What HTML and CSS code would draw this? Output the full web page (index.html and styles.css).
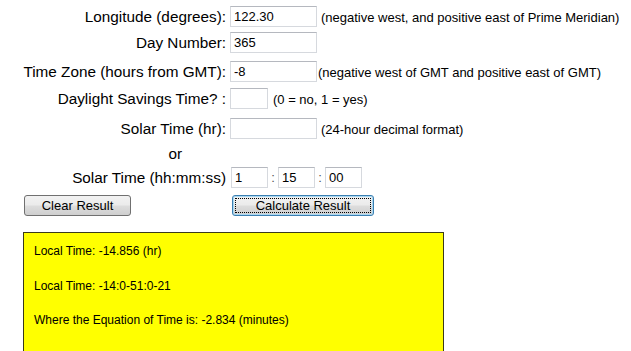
FILE: index.html
```html
<!DOCTYPE html>
<html lang="en">
<head>
    <meta charset="UTF-8">
    <title>Local Time from Solar Time</title>
    <link rel="stylesheet" href="styles.css">
</head>
<body>
    <div class="calc">
        <label class="label">Longitude (degrees):</label>
        <div class="field"><input class="box" type="text" value="122.30"><span class="note spaced">(negative west, and positive east of Prime Meridian)</span></div>

        <label class="label">Day Number:</label>
        <div class="field"><input class="box" type="text" value="365"></div>

        <label class="label">Time Zone (hours from GMT):</label>
        <div class="field"><input class="box" type="text" value="-8"><span class="note">(negative west of GMT and positive east of GMT)</span></div>

        <label class="label">Daylight Savings Time? :</label>
        <div class="field"><input class="box small" type="text" value=""><span class="note wide">(0 = no, 1 = yes)</span></div>

        <label class="label">Solar Time (hr):</label>
        <div class="field"><input class="box" type="text" value=""><span class="note spaced">(24-hour decimal format)</span></div>

        <div class="label or">or</div>
        <div class="field"></div>

        <label class="label">Solar Time (hh:mm:ss)</label>
        <div class="field">
            <input class="box hms" type="text" value="1"><span class="colon">:</span><input class="box hms" type="text" value="15"><span class="colon">:</span><input class="box hms" type="text" value="00">
        </div>

        <div class="btn-cell"><button class="btn clear">Clear Result</button></div>
        <div class="field"><button class="btn calc-btn"><span class="focus">Calculate Result</span></button></div>
    </div>

    <div class="result">
        <p>Local Time: -14.856 (hr)</p>
        <p>Local Time: -14:0-51:0-21</p>
        <p>Where the Equation of Time is: -2.834 (minutes)</p>
    </div>
</body>
</html>
```

FILE: styles.css
```css
body {
    margin: 0;
    font-family: 'Liberation Sans', Arial, sans-serif;
    color: #000;
    background: #fff;
}
.calc {
    display: grid;
    grid-template-columns: 226px auto;
    grid-template-rows: 26px 29px 27px 30px 25px 24px 28px 21px;
    column-gap: 4px;
    padding-top: 6px;
}
.label {
    font-size: 15.3px;
    line-height: 21px;
    text-align: right;
    white-space: nowrap;
}
.or {
    padding-right: 44px;
}
.field {
    display: flex;
    align-items: center;
    height: 21px;
    white-space: nowrap;
}
.box {
    box-sizing: border-box;
    width: 87px;
    height: 21px;
    margin: 0;
    padding: 0 3px;
    border: 1px solid #d6d9de;
    border-top-color: #b5b8bf;
    font-family: 'Liberation Sans', Arial, sans-serif;
    font-size: 13px;
    color: #000;
    background: #fff;
}
.small {
    width: 38px;
}
.hms {
    width: 37px;
}
.colon {
    width: 10px;
    text-align: center;
    font-size: 13px;
    color: #555;
}
.hms:first-child {
    margin-left: 1px;
}
.note {
    font-size: 13px;
    line-height: 21px;
    padding-top: 2px;
    margin-left: 1px;
}
.spaced {
    margin-left: 4px;
}
.wide {
    margin-left: 5px;
}
.btn-cell {
    padding-left: 24px;
}
.btn {
    box-sizing: border-box;
    height: 21px;
    margin: 0;
    padding: 0;
    border: 1px solid #707070;
    border-radius: 3px;
    background: linear-gradient(#f2f2f2 0%, #ebebeb 48%, #dddddd 52%, #cfcfcf 100%);
    font-family: 'Liberation Sans', Arial, sans-serif;
    font-size: 13px;
    color: #000;
}
.clear {
    width: 107px;
}
.calc-btn {
    width: 142px;
    margin-left: 2px;
    border-color: #3c7fb1;
    padding: 2px;
    box-shadow: 0 0 0 1px #a9d8f2 inset;
}
.focus {
    display: block;
    height: 100%;
    box-sizing: border-box;
    border: 1px dotted #000;
    line-height: 13px;
}
.result {
    box-sizing: border-box;
    width: 421px;
    height: 150px;
    margin: 16px 0 0 23px;
    padding: 11px 10px;
    border: 1px solid #3a3a1a;
    background: #ffff00;
    font-size: 12px;
}
.result p {
    margin: 0 0 20px;
    line-height: 14.5px;
}
```
